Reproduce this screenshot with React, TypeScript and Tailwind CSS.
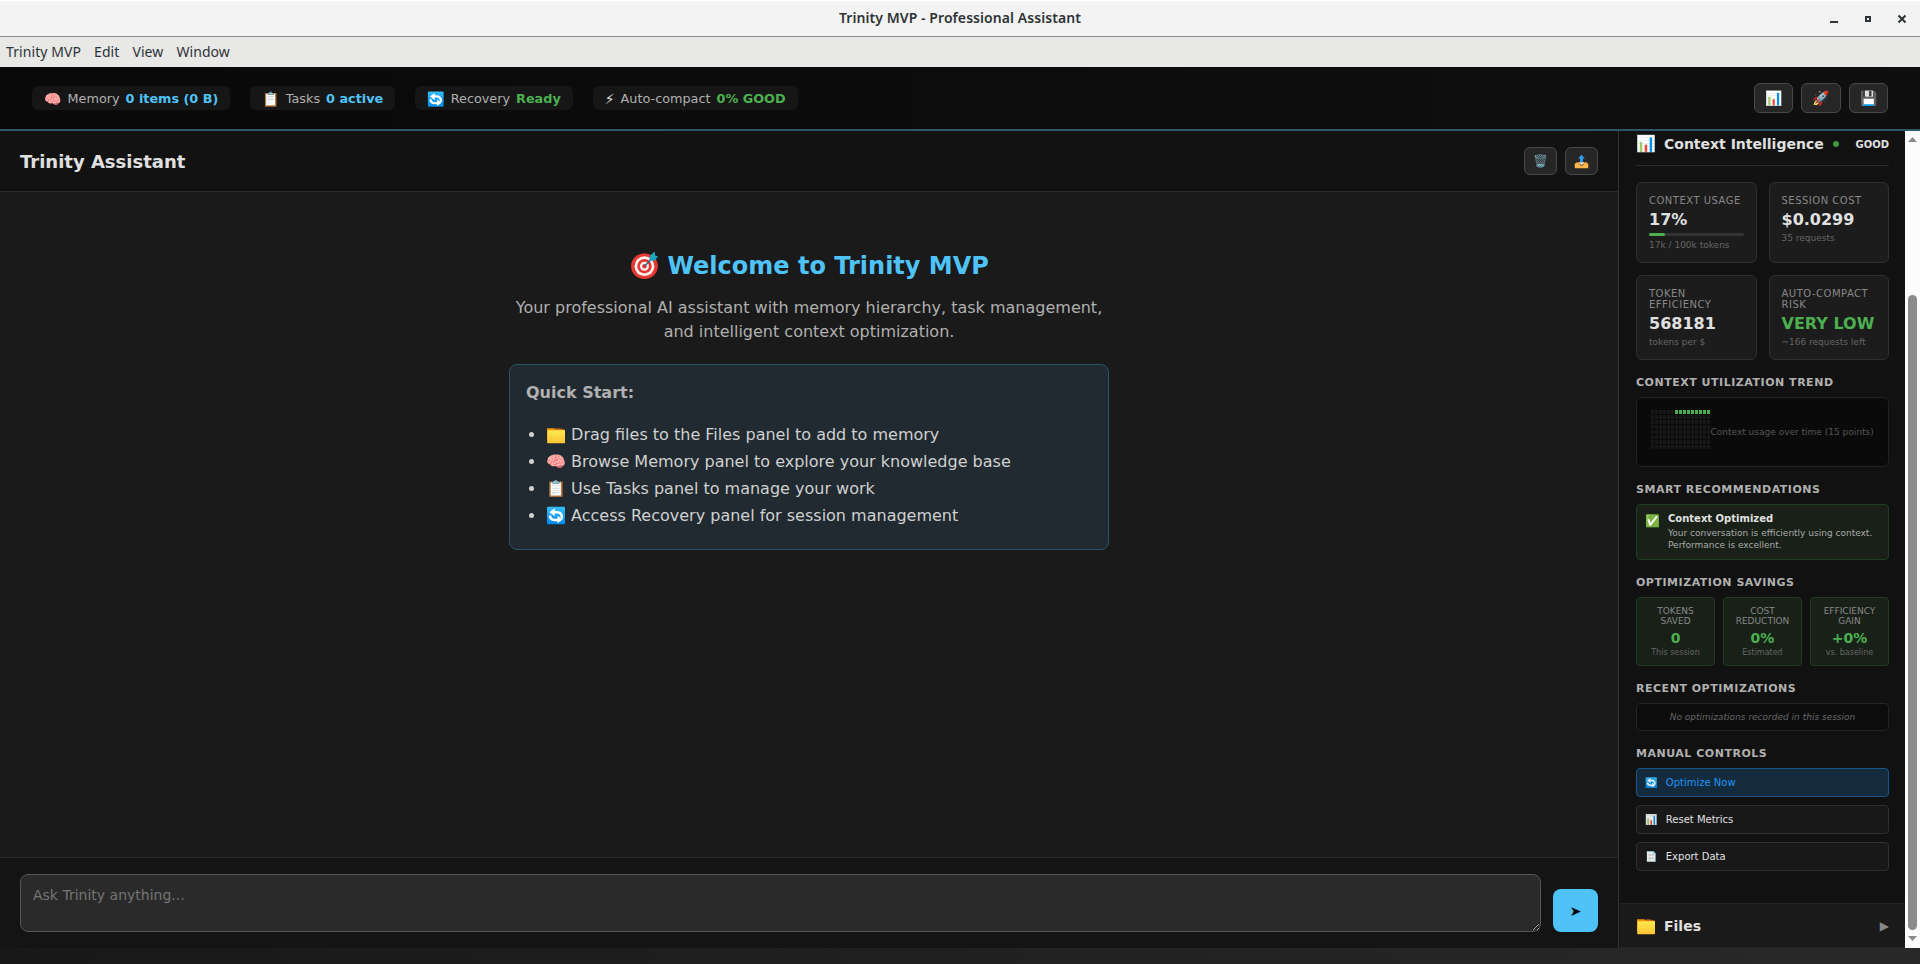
import React from "react";

const font = "font-['DejaVu_Sans','Noto_Color_Emoji',sans-serif]";
const glyph = "inline-block h-[1.25em] w-[1.25em] shrink-0 align-[-0.25em]";

function FolderIcon() {
  return (
    <svg className={glyph} viewBox="0 0 20 20">
      <defs>
        <linearGradient id="folder" x1="0" y1="0" x2="0" y2="1">
          <stop offset="0" stopColor="#ffe94f" />
          <stop offset="1" stopColor="#fbc434" />
        </linearGradient>
      </defs>
      <path d="M1 4.300h7.500l2 1.200h8v10H1z" fill="#f59300" />
      <path d="M10 4.600h5l2 1.500h-7z" fill="#d96c1a" />
      <path d="M1.800 6.200H19v12.300a.7.7 0 0 1-.7.7H2.100a1 1 0 0 1-1-1z" fill="url(#folder)" />
    </svg>
  );
}

function RecoveryIcon() {
  return (
    <svg className={glyph} viewBox="0 0 20 20">
      <defs>
        <linearGradient id="recovery" x1="0" y1="0" x2="0" y2="1">
          <stop offset="0" stopColor="#35bdf8" />
          <stop offset="1" stopColor="#0288ec" />
        </linearGradient>
      </defs>
      <rect x="1" y="1.800" width="18" height="17.400" rx="1" fill="url(#recovery)" />
      <path d="M16 13.500c0-4-1.500-6.200-5-6.200H8" fill="none" stroke="#fff" strokeWidth="2.500" />
      <path d="M8.800 3.300v8L3.300 7.300z" fill="#fff" />
      <path d="M4 10.500c0 3.200 2 4.500 5 4.500h3" fill="none" stroke="#fff" strokeWidth="2.500" />
      <path d="M11.500 10.800v7.400l5.200-3.700z" fill="#fff" />
    </svg>
  );
}

function OutboxIcon() {
  return (
    <svg className={glyph} viewBox="0 0 20 20">
      <path d="M10 1l4.500 5H12v5H8V6H5.500z" fill="#2f9bf0" />
      <path d="M3 11h14l2 3H1z" fill="#e8912a" />
      <path d="M1 12.500h5.500c.5 2 1.700 2.700 3.500 2.700s3-.7 3.500-2.700H19V19H1z" fill="#ffb74d" />
      <path d="M6.500 11h7c-.2 2.200-1.500 3.200-3.500 3.200S6.700 13.200 6.500 11z" fill="#d9d4c8" />
    </svg>
  );
}

function TargetIcon() {
  return (
    <svg className={glyph} viewBox="0 0 20 20">
      <ellipse cx="10.300" cy="10.800" rx="8.900" ry="8.600" fill="#e53935" />
      <circle cx="10.300" cy="10.800" r="6.600" fill="#fff3ee" />
      <circle cx="10.300" cy="10.800" r="4.800" fill="#e53935" />
      <circle cx="10.300" cy="10.800" r="3" fill="#fff3ee" />
      <circle cx="10.300" cy="10.800" r="1.500" fill="#e53935" />
      <path d="M10.300 10.800L16 5" stroke="#37688c" strokeWidth="1" />
      <path d="M13.500 7.200l.6-3.500 3-2.700.4 2.600 1.900.8-2.400 2.800z" fill="#18a5bd" />
    </svg>
  );
}

function Chip({ icon, label, value, color, narrow }: { icon: React.ReactNode; label: string; value: string; color: string; narrow?: boolean }) {
  return (
    <div className="flex h-6 items-center gap-1.5 rounded-md bg-[#161616] px-3 pt-px text-[12.8px] whitespace-nowrap text-[#b0b0b0]">
      <span className={`text-[14px] leading-5 ${narrow ? "text-[#e0e0e0]" : "w-[17.5px]"}`}>{icon}</span>
      <span>{label}</span>
      <span className={`font-bold ${color}`}>{value}</span>
    </div>
  );
}

function Metric({ label, value, sub, bar, green }: { label: string; value: string; sub: string; bar?: boolean; green?: boolean }) {
  return (
    <div className="rounded-md border border-[#2f2f2f] bg-[#1c1c1c] p-3">
      <div className="text-[10px] leading-[11px] tracking-[0.5px] text-[#888]">{label}</div>
      <div className={`mt-1 text-base leading-[19px] font-bold whitespace-nowrap ${green ? "text-[#4caf50]" : "text-[#e0e0e0]"}`}>{value}</div>
      {bar && (
        <div className="mt-1 h-[3px] rounded-full bg-[#333]">
          <div className="h-[3px] w-[17%] rounded-full bg-[#4caf50]" />
        </div>
      )}
      <div className="mt-1 text-[9px] leading-[11px] whitespace-nowrap text-[#666]">{sub}</div>
    </div>
  );
}

function Saving({ a, b, value, sub }: { a: string; b: string; value: string; sub: string }) {
  return (
    <div className="h-[69px] flex-1 rounded border border-[#1f3d20] bg-[#182018] pt-2 text-center">
      <div className="text-[9px] leading-[10px] text-[#888]">{a}<br />{b}</div>
      <div className="mt-1 text-sm leading-4 font-bold text-[#4caf50]">{value}</div>
      <div className="text-[8px] leading-[13px] text-[#666]">{sub}</div>
    </div>
  );
}

function SectionTitle({ children }: { children: React.ReactNode }) {
  return <div className="h-[13px] text-[11px] leading-[13px] font-bold tracking-[0.52px] text-[#b0b0b0]">{children}</div>;
}

function Control({ icon, label, primary }: { icon: React.ReactNode; label: string; primary?: boolean }) {
  return (
    <div className={`flex h-[29px] items-center rounded border pl-2 text-[10px] ${primary ? "border-[#17568c] bg-[#142a3d] text-[#2196f3]" : "border-[#2f2f2f] bg-[#181818] text-[#e0e0e0]"}`}>
      <span className="w-[20.8px] text-[10px] opacity-90">{icon}</span>
      <span>{label}</span>
    </div>
  );
}

function IconButton({ children, className }: { children: React.ReactNode; className: string }) {
  return <div className={`flex items-center justify-center rounded-md border border-[#484848] bg-[#262626] ${className}`}>{children}</div>;
}

const cells = Array.from({ length: 120 }, (_, i) => i);

export default function App() {
  return (
    <div className={`flex h-[964px] w-[1920px] flex-col overflow-hidden bg-linear-to-r from-[#181818] to-[#292929] leading-normal ${font}`}>
      <div className="grid h-[37px] shrink-0 grid-cols-[1fr_auto_1fr] items-center border-t border-b border-t-white border-b-[#8d8d88] bg-[#f3f3f3] font-['Noto_Sans',sans-serif] text-[#2e3436]">
        <span />
        <span className="pb-0.5 text-[14px] font-semibold tracking-[0.07px]">Trinity MVP - Professional Assistant</span>
        <svg className="justify-self-end" width="100" height="20" viewBox="1820 8 100 20" fill="none" stroke="#2e3436">
          <path d="M1830 21h8" strokeWidth="2" />
          <rect x="1866" y="16" width="4" height="4" strokeWidth="2" />
          <path d="M1898.500 14.500l7 7M1905.500 14.500l-7 7" strokeWidth="2" />
        </svg>
      </div>
      <div className="flex h-[30px] shrink-0 items-center gap-[13px] bg-[#e8e8e6] pb-0.5 pl-1.5 font-['Noto_Sans',sans-serif] text-[14px] tracking-[0.08px] text-[#2e3436]">
        <span>Trinity MVP</span><span>Edit</span><span>View</span><span>Window</span>
      </div>

      <div className="flex h-16 shrink-0 items-center justify-between border-b-2 border-[#2e556a] bg-linear-to-r from-[#090909] to-[#0f0f0f] px-8">
        <div className="flex gap-5">
          <Chip icon="🧠" label="Memory" value="0 items (0 B)" color="text-[#4fc3f7]" />
          <Chip icon="📋" label="Tasks" value="0 active" color="text-[#4fc3f7]" />
          <Chip icon={<RecoveryIcon />} label="Recovery" value="Ready" color="text-[#4caf50]" />
          <Chip icon="⚡" label="Auto-compact" value="0% GOOD" color="text-[#4caf50]" narrow />
        </div>
        <div className="flex gap-2 text-[14px]">
          <IconButton className="h-[30px] w-[39px] pl-px">📊</IconButton>
          <IconButton className="h-[30px] w-[40px]">🚀</IconButton>
          <IconButton className="h-[30px] w-[39px] pl-px">💾</IconButton>
        </div>
      </div>

      <div className="flex h-[817px] shrink-0">
        <div className="flex w-[1619px] flex-col border-r border-[#333] bg-[#1a1a1a]">
          <div className="flex h-[61px] shrink-0 items-center justify-between border-b border-[#2a2a2a] bg-[#121212] px-5">
            <h1 className="pt-0.5 text-lg font-bold text-[#e0e0e0]">Trinity Assistant</h1>
            <div className="flex gap-2 text-[12px]">
              <IconButton className="h-7 w-[33px]"><span className="opacity-80">🗑️</span></IconButton>
              <IconButton className="h-7 w-[33px]"><OutboxIcon /></IconButton>
            </div>
          </div>
          <div className="flex flex-1 flex-col items-center pt-14">
            <h2 className="text-2xl leading-9 font-bold text-[#4fc3f7]"><TargetIcon /> Welcome to Trinity MVP</h2>
            <p className="mt-3 w-[600px] text-center text-base leading-6 text-[#b0b0b0]">
              Your professional AI assistant with memory hierarchy, task management, and intelligent context optimization.
            </p>
            <div className="mt-5 h-[186px] w-[600px] rounded-lg border border-[#2a5569] bg-[#202a30] px-4 pt-4">
              <div className="text-base leading-6 font-bold text-[#b0b0b0]">Quick Start:</div>
              <ul className="mt-4 list-disc pl-5 text-base leading-[27px] text-[#d0d0d0]">
                <li><FolderIcon /> Drag files to the Files panel to add to memory</li>
                <li>🧠 Browse Memory panel to explore your knowledge base</li>
                <li>📋 Use Tasks panel to manage your work</li>
                <li><RecoveryIcon /> Access Recovery panel for session management</li>
              </ul>
            </div>
          </div>
          <div className="flex h-[91px] shrink-0 items-end gap-3 border-t border-[#2a2a2a] bg-[#141414] px-5 pb-4">
            <textarea
              className="block h-[58px] flex-1 resize rounded-lg border border-[#555] bg-[#2a2a2a] px-3 py-2.5 text-sm placeholder:text-[#757575]"
              placeholder="Ask Trinity anything..."
            />
            <div className="flex h-[43px] w-[45px] items-center justify-center rounded-lg bg-[#4fc3f7] text-sm text-black">➤</div>
          </div>
        </div>

        <div className="flex w-[286px] flex-col bg-[#111]">
          <div className="flex h-[772px] flex-col pr-4 pl-[17px]">
            <div className="flex h-[35px] shrink-0 items-center border-b border-[#2a2a2a] pb-2">
              <span className="w-7 text-base">📊</span>
              <span className="text-sm font-bold whitespace-nowrap text-[#e0e0e0]">Context Intelligence</span>
              <span className="ml-[9px] size-1.5 rounded-full bg-[#3f9844]" />
              <span className="ml-auto text-[10px] font-bold text-[#e0e0e0]">GOOD</span>
            </div>
            <div className="mt-4 grid shrink-0 grid-cols-[120.5px_120.5px] grid-rows-[81px_85px] gap-3">
              <Metric label="CONTEXT USAGE" value="17%" sub="17k / 100k tokens" bar />
              <Metric label="SESSION COST" value="$0.0299" sub="35 requests" />
              <Metric label="TOKEN EFFICIENCY" value="568181" sub="tokens per $" />
              <Metric label="AUTO-COMPACT RISK" value="VERY LOW" sub="~166 requests left" green />
            </div>
            <div className="mt-4"><SectionTitle>CONTEXT UTILIZATION TREND</SectionTitle></div>
            <div className="mt-2 flex h-[70px] shrink-0 rounded-md border border-[#222] bg-[#0a0a0a] pt-3 pl-3.5">
              <div className="grid h-[39px] w-[60px] grid-cols-[repeat(15,3px)] grid-rows-[repeat(8,4px)] gap-px">
                {cells.map((i) => <div key={i} className={i > 5 && i < 15 ? "bg-[#4caf50]" : "bg-[#171717]"} />)}
              </div>
              <span className="-ml-[0.5px] mt-[15px] text-[9px] leading-[14px] whitespace-nowrap text-[#555]">Context usage over time (15 points)</span>
            </div>
            <div className="mt-4"><SectionTitle>SMART RECOMMENDATIONS</SectionTitle></div>
            <div className="mt-2 flex h-14 shrink-0 rounded border border-[#1f3d20] bg-[#182018] pt-2 pl-2">
              <span className="w-[23px] text-[12px] leading-[17px]">✅</span>
              <div className="whitespace-nowrap">
                <div className="text-[10px] leading-3 font-bold text-[#e0e0e0]">Context Optimized</div>
                <div className="mt-0.5 text-[9px] leading-3 text-[#aaa]">Your conversation is efficiently using context.<br />Performance is excellent.</div>
              </div>
            </div>
            <div className="mt-4"><SectionTitle>OPTIMIZATION SAVINGS</SectionTitle></div>
            <div className="mt-2 flex gap-2">
              <Saving a="TOKENS" b="SAVED" value="0" sub="This session" />
              <Saving a="COST" b="REDUCTION" value="0%" sub="Estimated" />
              <Saving a="EFFICIENCY" b="GAIN" value="+0%" sub="vs. baseline" />
            </div>
            <div className="mt-4"><SectionTitle>RECENT OPTIMIZATIONS</SectionTitle></div>
            <div className="mt-2 flex h-7 shrink-0 items-center justify-center rounded border border-[#242424] bg-[#0c0c0c] pt-0.5 text-[9px] text-[#666] italic">No optimizations recorded in this session</div>
            <div className="mt-4"><SectionTitle>MANUAL CONTROLS</SectionTitle></div>
            <div className="mt-2 flex flex-col gap-2">
              <Control icon={<RecoveryIcon />} label="Optimize Now" primary />
              <Control icon="📊" label="Reset Metrics" />
              <Control icon="📄" label="Export Data" />
            </div>
          </div>
          <div className="ml-px flex h-[45px] items-center border-t border-b border-[#242424] bg-[#1a1a1a] pr-4 pl-4 text-sm text-[#e0e0e0]">
            <span className="w-7 text-base"><FolderIcon /></span>
            <span className="font-bold">Files</span>
            <span className="ml-auto text-xs text-[#888]">▶</span>
          </div>
        </div>

        <div className="flex w-[15px] flex-col items-center bg-[#fcfcfc]">
          <svg className="mt-[6px]" width="9" height="5"><path d="M4.500 0L9 5H0z" fill="#8b8b8b" /></svg>
          <div className="mt-[153px] h-[635px] w-[9px] rounded-full bg-[#8b8b8b]" />
          <svg className="mt-[6px]" width="9" height="5"><path d="M4.500 5L9 0H0z" fill="#8b8b8b" /></svg>
        </div>
      </div>
    </div>
  );
}
